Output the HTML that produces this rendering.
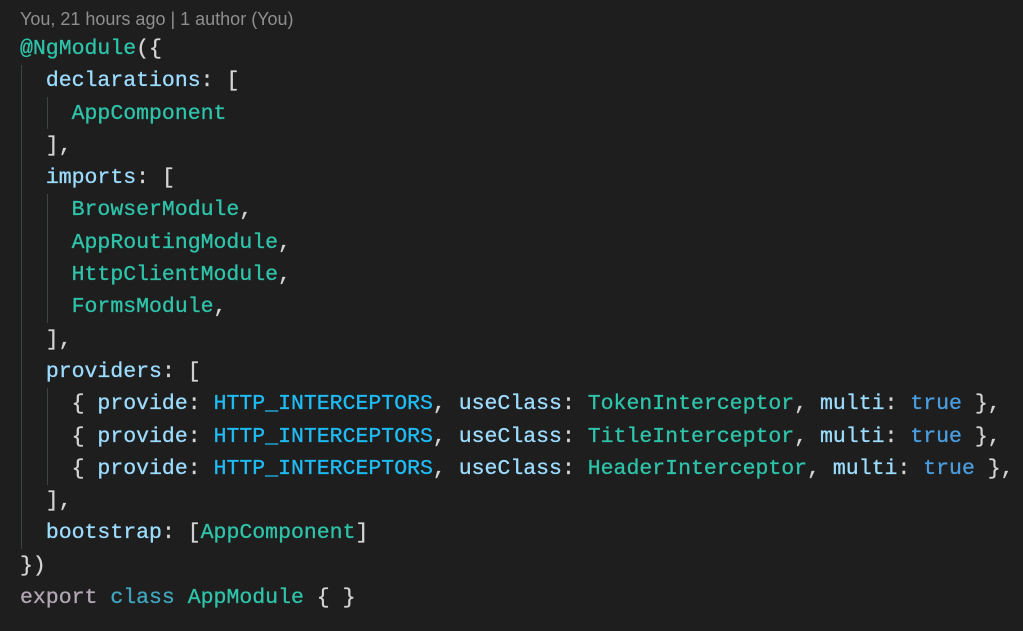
<!DOCTYPE html>
<html><head><style>
body{margin:0;background:#1e1e1e;width:1023px;height:631px;overflow:hidden;position:relative}
.blame{position:absolute;left:20px;top:9px;font:18px "Liberation Sans",sans-serif;color:#8f8f8f}
pre{position:absolute;left:20px;top:33px;margin:0;font:21.5px/32.3px "Liberation Mono",monospace;color:#d4d4d4;letter-spacing:0;-webkit-text-stroke:0.3px}
.p{color:#9cdcfe}.c{color:#2ec4aa}.k{color:#1fbcf5}.b{color:#4a9ee0}.e{color:#b3a7b5}.cl{color:#3fa6bf}
.g{position:absolute;width:1px;background:#3c4448}
</style></head><body>
<div class="blame">You, 21 hours ago | 1 author (You)</div>
<div class="g" style="left:21px;top:65px;height:484px"></div>
<div class="g" style="left:47px;top:97px;height:32px"></div>
<div class="g" style="left:47px;top:194px;height:129px"></div>
<div class="g" style="left:47px;top:388px;height:97px"></div>
<pre><span class="c">@NgModule</span>({
  <span class="p">declarations</span>: [
    <span class="c">AppComponent</span>
  ],
  <span class="p">imports</span>: [
    <span class="c">BrowserModule</span>,
    <span class="c">AppRoutingModule</span>,
    <span class="c">HttpClientModule</span>,
    <span class="c">FormsModule</span>,
  ],
  <span class="p">providers</span>: [
    { <span class="p">provide</span>: <span class="k">HTTP_INTERCEPTORS</span>, <span class="p">useClass</span>: <span class="c">TokenInterceptor</span>, <span class="p">multi</span>: <span class="b">true</span> },
    { <span class="p">provide</span>: <span class="k">HTTP_INTERCEPTORS</span>, <span class="p">useClass</span>: <span class="c">TitleInterceptor</span>, <span class="p">multi</span>: <span class="b">true</span> },
    { <span class="p">provide</span>: <span class="k">HTTP_INTERCEPTORS</span>, <span class="p">useClass</span>: <span class="c">HeaderInterceptor</span>, <span class="p">multi</span>: <span class="b">true</span> },
  ],
  <span class="p">bootstrap</span>: [<span class="c">AppComponent</span>]
})
<span class="e">export</span> <span class="cl">class</span> <span class="c">AppModule</span> { }</pre>
</body></html>
